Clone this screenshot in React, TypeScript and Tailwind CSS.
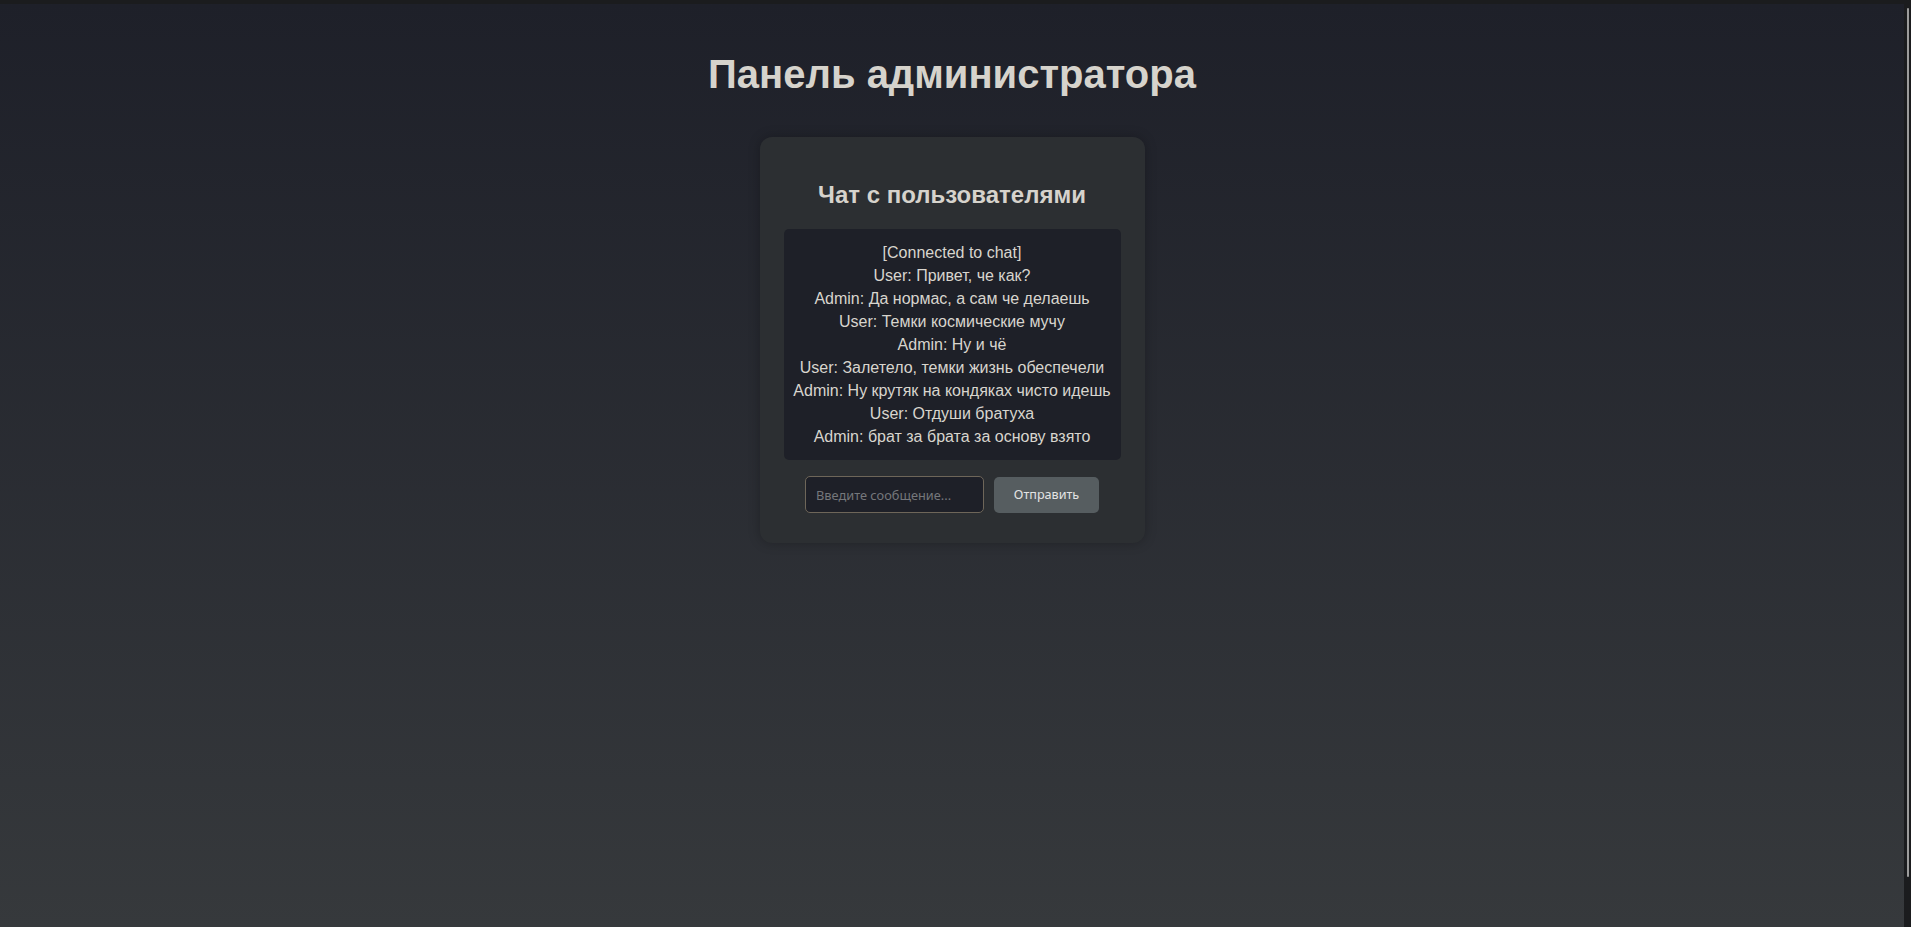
import React from "react";

const messages = [
  "[Connected to chat]",
  "User: Привет, че как?",
  "Admin: Да нормас, а сам че делаешь",
  "User: Темки космические мучу",
  "Admin: Ну и чё",
  "User: Залетело, темки жизнь обеспечели",
  "Admin: Ну крутяк на кондяках чисто идешь",
  "User: Отдуши братуха",
  "Admin: брат за брата за основу взято",
];

export default function App() {
  return (
    <div className="flex h-[927px] flex-col overflow-hidden bg-[#1b1c1e] font-['Liberation_Sans',Arial,sans-serif]">
      <div className="h-[4px] shrink-0" />
      <div className="flex min-h-0 flex-1">
        <main className="flex flex-1 flex-col items-center bg-gradient-to-b from-[#1e2029] to-[#36393c] text-[#d6d3cc]">
          <h1 className="mt-[47px] text-[40px] font-bold leading-[46px]">Панель администратора</h1>
          <section className="mt-[40px] w-[385px] rounded-[12px] bg-[#2c2f32] px-[24px] pt-[44px] pb-[30px] shadow-[0_0_12px_rgba(0,0,0,0.25)]">
            <h2 className="text-center text-[24px] font-bold leading-[27px]">Чат с пользователями</h2>
            <div className="mt-[21px] rounded-[5px] bg-[#1e2028] py-[12px] text-center text-[16px] leading-[23px] text-[#d8d5ce]">
              {messages.map((m) => (
                <div key={m}>{m}</div>
              ))}
            </div>
            <div className="mt-[16px] flex items-center justify-center gap-[10px] font-['Noto_Sans',sans-serif]">
              <input
                type="text"
                placeholder="Введите сообщение..."
                className="h-[37px] w-[179px] rounded-[5px] border border-[#6e6659] bg-[#1e2028] px-[10px] pt-[1px] text-[12.8px] text-[#d6d3cc] outline-none placeholder:text-[#75777b]"
              />
              <button className="h-[36px] w-[105px] rounded-[5px] bg-[#565d60] pt-[1px] text-[12.6px] text-[#e4e4e4]">Отправить</button>
            </div>
          </section>
        </main>
        <aside className="w-[7px] shrink-0 bg-[#1b1c1e] pl-[3px] pt-[4px]">
          <div className="h-[869px] w-[2px] rounded-full bg-[#9c9c9c]" />
        </aside>
      </div>
    </div>
  );
}
